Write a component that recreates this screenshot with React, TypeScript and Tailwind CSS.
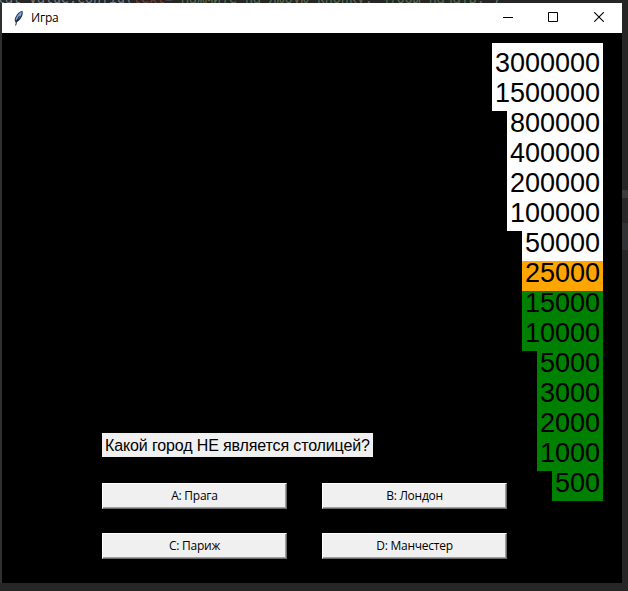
const levels = [
  { sum: "3000000", tone: "bg-white text-black" },
  { sum: "1500000", tone: "bg-white text-black" },
  { sum: "800000", tone: "bg-white text-black" },
  { sum: "400000", tone: "bg-white text-black" },
  { sum: "200000", tone: "bg-white text-black" },
  { sum: "100000", tone: "bg-white text-black" },
  { sum: "50000", tone: "bg-white text-black" },
  { sum: "25000", tone: "bg-[#ffa500] text-black" },
  { sum: "15000", tone: "bg-[#008000] text-black" },
  { sum: "10000", tone: "bg-[#008000] text-black" },
  { sum: "5000", tone: "bg-[#008000] text-black" },
  { sum: "3000", tone: "bg-[#008000] text-black" },
  { sum: "2000", tone: "bg-[#008000] text-black" },
  { sum: "1000", tone: "bg-[#008000] text-black" },
  { sum: "500", tone: "bg-[#008000] text-black" },
];

const answers = ["A: Прага", "B: Лондон", "C: Париж", "D: Манчестер"];

function FeatherIcon() {
  return (
    <svg width="12" height="17" viewBox="0 0 12 17" className="block">
      <path d="M9.500 .7C5.500 1.800 2 6 1.700 10L2.200 12.500l3-1.300C8.500 8.500 10.500 4.500 9.500 .7Z" fill="#2b3a52" />
      <path d="M8.700 1.800C5.500 3.500 3 7 2.600 10.500C6 9 8.800 5.500 8.700 1.800Z" fill="#7ea8e6" />
      <path d="M6.500 6C5 8.500 3.800 10.500 2.600 15.500" stroke="#10141c" strokeWidth=".9" fill="none" />
    </svg>
  );
}

function TitleBar() {
  return (
    <header className="flex h-[30px] items-center bg-white pl-[11px]">
      <FeatherIcon />
      <h1 className="ml-[6px] text-[12px] leading-[16px] tracking-[-0.2px] text-black">Игра</h1>
      <div className="ml-auto flex h-full text-black">
        <button className="flex h-full w-[46px] items-center justify-center" aria-label="Свернуть">
          <svg width="10" height="10" shapeRendering="crispEdges"><path d="M0 4h10v1H0z" fill="currentColor" /></svg>
        </button>
        <button className="flex h-full w-[45px] items-center justify-center pr-px pb-[2px]" aria-label="Развернуть">
          <svg width="10" height="10"><path d="M.5 .5h9v9h-9z" stroke="currentColor" fill="none" /></svg>
        </button>
        <button className="flex h-full w-[46px] items-center justify-center pb-[2px]" aria-label="Закрыть">
          <svg width="10" height="10"><path d="M.2 .2l9.600 9.600M9.800 .2L.2 9.800" stroke="currentColor" strokeWidth="1.100" fill="none" /></svg>
        </button>
      </div>
    </header>
  );
}

export default function App() {
  return (
    <div className="h-[591px] w-[628px] overflow-hidden bg-[#262626] font-['Open_Sans','Noto_Sans',sans-serif]">
      <div className="h-[3px] overflow-hidden">
        <p className="-ml-[3px] -mt-[9px] whitespace-pre font-['DejaVu_Sans_Mono',monospace] text-[13.290px] leading-[15px] text-[#777d82]">
          lat value.config(<span className="text-[#7d3f33]">text</span>=<span className="text-[#596d50]">"Нажмите на любую кнопку, чтобы начать."</span>)
        </p>
      </div>
      <div className="flex">
        <div className="w-[2px] bg-[#303030]" />
        <main className="flex h-[580px] w-[620px] flex-col bg-black">
          <TitleBar />
          <div className="flex h-[550px] justify-between pr-[19px]">
            <section className="w-[480px] flex-none pl-[100px] pt-[400px]">
              <p className="h-[24px] w-[271px] whitespace-nowrap bg-[#f0f0f0] pl-[3px] pt-px font-['Liberation_Sans',Arial,sans-serif] text-[16px] leading-[24px] tracking-[-0.13px] text-black">
                Какой город НЕ является столицей?
              </p>
              <div className="mt-[26px] grid grid-cols-[185px_185px] gap-x-[35px] gap-y-[24px]">
                {answers.map((answer) => (
                  <button
                    key={answer}
                    className="flex h-[26px] items-center justify-center border border-b-[#696969] border-l-white border-r-[#696969] border-t-white bg-[#f0f0f0] text-[12px] leading-[16px] tracking-[-0.25px] text-black shadow-[inset_-1px_-1px_0_#a0a0a0]"
                  >
                    {answer}
                  </button>
                ))}
              </div>
            </section>
            <ol className="flex flex-none flex-col items-end pt-[10px] font-['Liberation_Sans',Arial,sans-serif] text-[27px] leading-[30px]">
              {levels.map((level) => (
                <li key={level.sum} className={`h-[30px] px-[3px] first:h-[38px] first:pt-[8px] ${level.tone}`}>
                  <span className="-mt-[3px] block">{level.sum}</span>
                </li>
              ))}
            </ol>
          </div>
        </main>
        <div className="flex w-[6px] flex-col">
          <div className="h-[187px] bg-[#262626]" />
          <div className="h-[8px] bg-[#3c3c3c]" />
          <div className="h-[25px] bg-[#282828]" />
          <div className="h-[27px] bg-[#303233]" />
          <div className="flex-1 bg-[#262626]" />
        </div>
      </div>
    </div>
  );
}
